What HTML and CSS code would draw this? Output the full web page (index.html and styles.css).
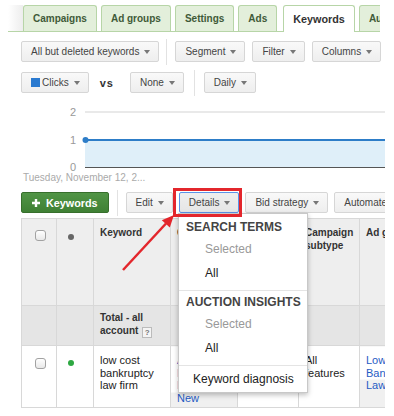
FILE: index.html
```html
<!DOCTYPE html>
<html lang="en">
  <head>
    <meta charset="UTF-8" />
    <meta name="viewport" content="width=device-width, initial-scale=1.0" />
    <title>Keywords - Details menu</title>
    <link rel="stylesheet" href="styles.css">
  </head>
  <body>
    <div class="screen">
      <div class="tabs">
        <span class="tabs-lead"></span>
        <a href="#" class="tab">Campaigns</a>
        <a href="#" class="tab">Ad groups</a>
        <a href="#" class="tab">Settings</a>
        <a href="#" class="tab">Ads</a>
        <a href="#" class="tab tab-active">Keywords</a>
        <a href="#" class="tab">Audiences</a>
      </div>

      <div class="toolbar toolbar-filters">
        <button class="btn">All but deleted keywords <span class="caret"></span></button>
        <span class="divider"></span>
        <button class="btn">Segment <span class="caret"></span></button>
        <button class="btn">Filter <span class="caret"></span></button>
        <button class="btn">Columns <span class="caret"></span></button>
      </div>

      <div class="toolbar toolbar-metrics">
        <button class="btn"><span class="swatch"></span>Clicks <span class="caret"></span></button>
        <span class="vs">vs</span>
        <button class="btn">None <span class="caret"></span></button>
        <span class="divider"></span>
        <button class="btn">Daily <span class="caret"></span></button>
      </div>

      <svg class="chart" width="385" height="92" viewBox="0 0 385 92">
        <line x1="85" y1="19" x2="385" y2="19" stroke="#e2e2e2" stroke-width="1.5" />
        <rect x="85" y="47" width="300" height="27" fill="#dfeff9" />
        <line x1="85" y1="47" x2="385" y2="47" stroke="#2d7dc8" stroke-width="2" />
        <circle cx="85.5" cy="47" r="3" fill="#2d7dc8" />
        <line x1="85" y1="74.5" x2="385" y2="74.5" stroke="#555" stroke-width="1" />
        <text x="76" y="23" class="axis-label" text-anchor="end">2</text>
        <text x="76" y="51" class="axis-label" text-anchor="end">1</text>
        <text x="76" y="78" class="axis-label" text-anchor="end">0</text>
        <text x="23" y="88" class="date-label">Tuesday, November 12, 2...</text>
      </svg>

      <div class="toolbar toolbar-actions">
        <button class="btn btn-primary">
          <svg width="8" height="8" viewBox="0 0 8 8"><path d="M4 0v8M0 4h8" stroke="#fff" stroke-width="2.4" /></svg>
          Keywords
        </button>
        <span class="divider"></span>
        <button class="btn">Edit <span class="caret"></span></button>
        <button class="btn btn-open">Details <span class="caret"></span></button>
        <button class="btn">Bid strategy <span class="caret"></span></button>
        <button class="btn">Automate <span class="caret"></span></button>
      </div>

      <table class="grid">
        <colgroup>
          <col class="c-check" />
          <col class="c-status" />
          <col class="c-keyword" />
          <col class="c-campaign" />
          <col class="c-type" />
          <col class="c-subtype" />
          <col class="c-adgroup" />
        </colgroup>
        <tr class="head-row">
          <td><span class="check"></span></td>
          <td><span class="dot"></span></td>
          <td>Keyword</td>
          <td>Campaign</td>
          <td>Campaign type</td>
          <td>Campaign subtype</td>
          <td>Ad group</td>
        </tr>
        <tr class="total-row">
          <td></td>
          <td></td>
          <td>Total - all account <span class="help">?</span></td>
          <td></td>
          <td></td>
          <td></td>
          <td></td>
        </tr>
        <tr class="data-row">
          <td><span class="check"></span></td>
          <td><span class="dot dot-on"></span></td>
          <td>low cost bankruptcy law firm</td>
          <td class="shaded-low"><a href="#">Attorney<br>Bankruptcy<br>Lawyers<br>New</a></td>
          <td>Search Network only</td>
          <td>All features</td>
          <td class="shaded-mid"><a href="#">Low Cost<br>Bankruptcy<br>Lawyers</a></td>
        </tr>
      </table>

      <div class="menu">
        <div class="menu-section">
          <div class="menu-title">SEARCH TERMS</div>
          <div class="menu-item muted">Selected</div>
          <div class="menu-item">All</div>
        </div>
        <div class="menu-section">
          <div class="menu-title">AUCTION INSIGHTS</div>
          <div class="menu-item muted">Selected</div>
          <div class="menu-item">All</div>
        </div>
        <div class="menu-link">Keyword diagnosis</div>
      </div>

      <span class="callout"></span>

      <svg class="pointer" width="385" height="408" viewBox="0 0 385 408">
        <line x1="123" y1="270" x2="166" y2="223.5" stroke="#e3262c" stroke-width="2.5" />
        <polygon points="174,215 161.8,220.2 169.8,227.6" fill="#e3262c" />
      </svg>
    </div>
  </body>
</html>
```

FILE: styles.css
```css
* {
  box-sizing: border-box;
}

body {
  margin: 0;
  background-color: white;
  color: #333;
  font-family: "Liberation Sans", Arial, sans-serif;
}

.screen {
  position: relative;
  width: 385px;
  height: 408px;
  overflow: hidden;
}

/* tabs */

.tabs {
  display: flex;
  align-items: flex-end;
  width: 372px;
  height: 27px;
  margin: 5px 0 0 8px;
  overflow: hidden;
  background: linear-gradient(#b7d5a7, #b7d5a7) bottom / 100% 1px no-repeat;
}

.tabs-lead {
  flex-shrink: 0;
  width: 15px;
  height: 26px;
  margin-bottom: 1px;
  background: linear-gradient(to right, #ffffff, #ededed);
}

.tab {
  flex-shrink: 0;
  display: flex;
  align-items: center;
  height: 26px;
  margin-bottom: 1px;
  padding: 0 9px;
  background-color: #e3efdb;
  border: 1px solid #b7d5a7;
  border-bottom: none;
  border-radius: 3px 3px 0 0;
  color: #3f5a38;
  font-size: 10px;
  font-weight: bold;
  text-decoration: none;
}

.tab + .tab {
  margin-left: 4px;
}

.tab-active {
  height: 27px;
  margin-bottom: 0;
  margin-left: 6px !important;
  padding: 0 9px 1px;
  background-color: white;
  color: #333;
  font-size: 10.8px;
}

/* toolbars */

.toolbar {
  display: flex;
  align-items: center;
  gap: 7px;
  height: 21px;
  padding-left: 21px;
}

.toolbar-filters {
  margin-top: 9px;
}

.toolbar-filters .divider {
  margin: 0 1px 0 0;
}

.toolbar-metrics {
  margin-top: 10px;
}

.toolbar-metrics .divider {
  margin: 0 2px 0 3px;
}

.toolbar-actions {
  margin-top: 7px;
  gap: 6px;
}

.btn {
  flex-shrink: 0;
  display: flex;
  align-items: center;
  gap: 5px;
  height: 21px;
  padding: 0 8px 0 9px;
  background: linear-gradient(#f9f9f9, #eeeeee);
  border: 1px solid #d6d6d6;
  border-radius: 2px;
  color: #444;
  font: 10px "Liberation Sans", Arial, sans-serif;
  white-space: nowrap;
}

.caret {
  width: 0;
  height: 0;
  border-left: 3.5px solid transparent;
  border-right: 3.5px solid transparent;
  border-top: 4px solid #777;
}

.swatch {
  width: 9px;
  height: 9px;
  margin-right: -3px;
  background-color: #2a7ad0;
}

.divider {
  flex-shrink: 0;
  width: 1px;
  height: 26px;
  margin: 0 2px 0 1px;
  background-color: #e2e2e2;
}

.vs {
  margin: 0 9px 0 4px;
  color: #333;
  font-size: 11px;
  font-weight: bold;
  letter-spacing: 1px;
}

.btn-primary {
  gap: 6px;
  padding: 0 10px;
  margin-right: 1px;
  background: linear-gradient(#519546, #3f8034);
  border-color: #376f2c;
  color: white;
  font-size: 10.8px;
  font-weight: bold;
}

.btn-open {
  background: linear-gradient(#eeeeee, #e6e6e6);
  border-color: #5b93e8;
}

/* chart */

.chart {
  display: block;
}

.axis-label {
  fill: #999;
  font-size: 11px;
  font-family: "Liberation Sans", Arial, sans-serif;
}

.date-label {
  fill: #aaa;
  font-size: 10px;
  font-family: "Liberation Sans", Arial, sans-serif;
}

/* keyword table */

.grid {
  width: 398px;
  margin: 5px 0 0 21px;
  border-collapse: collapse;
  table-layout: fixed;
}

.c-check { width: 35px; }
.c-status { width: 37px; }
.c-keyword { width: 77px; }
.c-campaign { width: 67px; }
.c-type { width: 61px; }
.c-subtype { width: 61px; }
.c-adgroup { width: 60px; }

.grid td {
  padding: 7px 6px 0;
  border: 1px solid #d8d8d8;
  vertical-align: top;
  text-align: left;
}

.head-row td {
  height: 87px;
  background-color: #eeeeee;
  font-size: 10px;
  font-weight: bold;
  line-height: 13px;
}

.total-row td {
  height: 40px;
  padding-top: 5px;
  background-color: #e5e5e5;
  font-size: 10px;
  font-weight: bold;
  line-height: 13px;
}

.data-row td {
  height: 62px;
  padding-top: 8px;
  background-color: white;
  color: #222;
  font-size: 11px;
  line-height: 12.5px;
}

.data-row a {
  color: #1f5bc4;
  text-decoration: none;
}

.data-row .shaded-low {
  background: linear-gradient(white 46px, #f0f0f0 46px);
}

.data-row .shaded-mid {
  background: linear-gradient(white 33px, #f0f0f0 33px);
}

.check {
  display: block;
  width: 11px;
  height: 11px;
  margin: 4px 0 0 7px;
  background: linear-gradient(#ffffff, #e8e8e8);
  border: 1px solid #a2a2a2;
  border-radius: 3px;
}

.dot {
  display: block;
  width: 6px;
  height: 6px;
  margin: 8px 0 0 5px;
  border-radius: 50%;
  background-color: #666;
}

.dot-on {
  margin-top: 6px;
  background-color: #2ea842;
}

.help {
  display: inline-block;
  width: 10px;
  height: 11px;
  margin-left: 1px;
  background-color: #f4f4f4;
  border: 1px solid #bbb;
  color: #777;
  font-size: 8px;
  line-height: 9px;
  text-align: center;
  vertical-align: -1px;
}

/* details menu */

.menu {
  position: absolute;
  left: 178px;
  top: 213px;
  width: 130px;
  padding-top: 2px;
  background-color: white;
  border: 1px solid #c8c8c8;
  box-shadow: 0 2px 5px rgba(0, 0, 0, 0.25);
  color: #222;
  font-size: 12px;
}

.menu-section {
  padding-bottom: 5px;
  border-bottom: 1px solid #e4e4e4;
}

.menu-title {
  margin-top: 1px;
  padding-left: 7px;
  color: #444;
  font-weight: bold;
  line-height: 20px;
}

.menu-item {
  padding-left: 26px;
  line-height: 24px;
}

.menu-item.muted {
  color: #999;
}

.menu-link {
  padding-left: 14px;
  line-height: 26px;
}

/* annotation */

.callout {
  position: absolute;
  left: 173px;
  top: 188px;
  width: 69px;
  height: 29px;
  border: 3px solid #e3262c;
}

.pointer {
  position: absolute;
  left: 0;
  top: 0;
  pointer-events: none;
}
```
